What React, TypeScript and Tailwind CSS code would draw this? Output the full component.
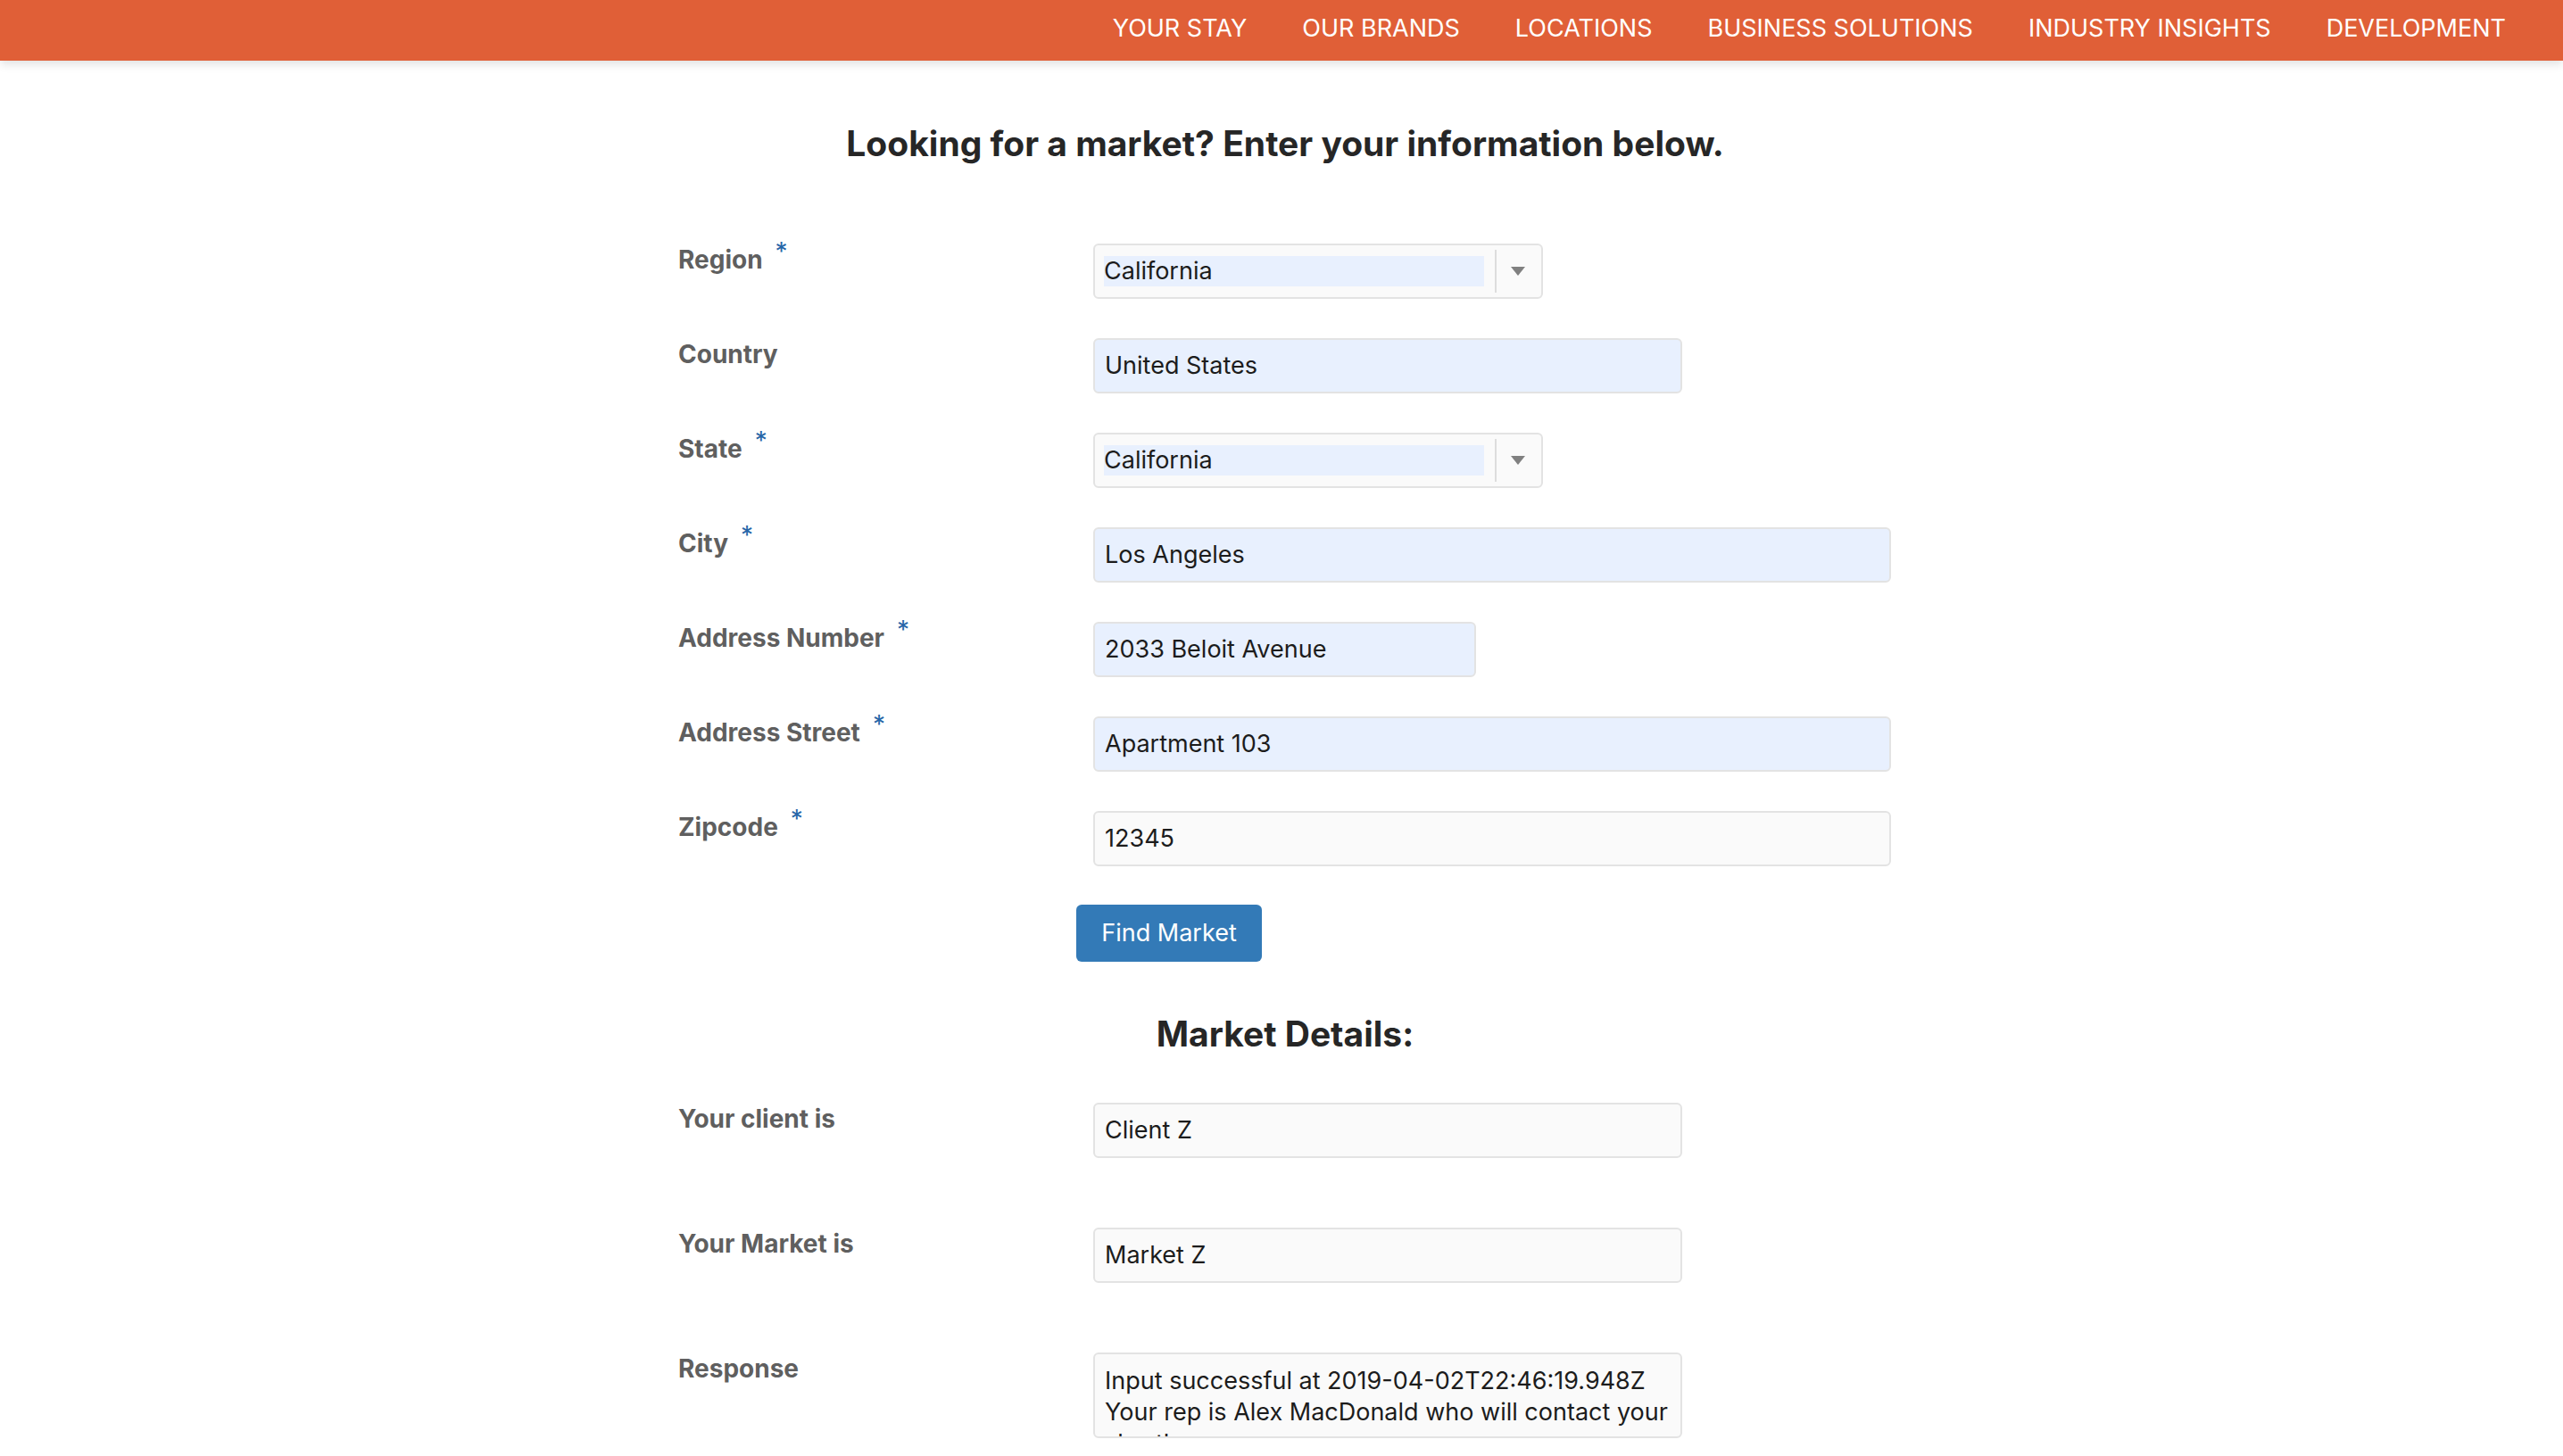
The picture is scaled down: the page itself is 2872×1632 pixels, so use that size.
import clsx from "clsx";

const NAV = [
  "YOUR STAY",
  "OUR BRANDS",
  "LOCATIONS",
  "BUSINESS SOLUTIONS",
  "INDUSTRY INSIGHTS",
  "DEVELOPMENT",
];

function Label({ text, required }: { text: string; required?: boolean }) {
  return (
    <div className="text-[28px] font-bold leading-[28px] text-[#5f5f5f]">
      {text}
      {required && (
        <span className="ml-[14px] align-[9px] font-normal leading-[0px] text-[#2766a8]">*</span>
      )}
    </div>
  );
}

function Row({
  label,
  required,
  children,
}: {
  label: string;
  required?: boolean;
  children: React.ReactNode;
}) {
  return (
    <div className="flex items-start">
      <div className="w-[465px] shrink-0 pt-[4px]">
        <Label text={label} required={required} />
      </div>
      {children}
    </div>
  );
}

function Field({
  value,
  width,
  autofill,
}: {
  value: string;
  width: string;
  autofill?: boolean;
}) {
  return (
    <div
      className={clsx(
        "flex h-[62px] shrink-0 items-center rounded-[6px] border-2 border-[#e3e3e3] px-[11px] text-[27px] text-[#1c1c1c]",
        autofill ? "bg-[#e8f0fe]" : "bg-[#fafafa]",
        width
      )}
    >
      {value}
    </div>
  );
}

function Select({ value }: { value: string }) {
  return (
    <div className="flex h-[62px] w-[504px] shrink-0 items-center rounded-[6px] border-2 border-[#e3e3e3] bg-[#fafafa] pl-[10px] pr-[18px]">
      <div className="flex h-[34px] flex-1 items-center bg-[#e8f0fe] text-[27px] text-[#1c1c1c]">
        {value}
      </div>
      <div className="ml-[12px] h-[48px] w-[2px] bg-[#dddddd]" />
      <svg className="ml-[16px]" width="16" height="10" viewBox="0 0 16 10">
        <polygon points="0,0 16,0 8,10" fill="#808080" />
      </svg>
    </div>
  );
}

export default function App() {
  return (
    <div className="min-h-screen bg-white font-['Inter',sans-serif]">
      <nav className="relative z-10 flex h-[68px] items-center justify-end bg-[#e05f37] pr-[33px] shadow-[0_4px_10px_rgba(0,0,0,0.12)]">
        {NAV.map((item) => (
          <a key={item} className="px-[31px] pb-[4px] text-[27px] text-white">
            {item}
          </a>
        ))}
      </nav>

      <div className="mx-auto w-[1368px] pl-2">
        <h1 className="mt-[69px] text-center text-[39px] font-bold leading-[48px] text-[#262626]">
          Looking for a market? Enter your information below.
        </h1>

        <div className="mt-[88px] flex flex-col gap-[44px]">
          <Row label="Region" required>
            <Select value="California" />
          </Row>
          <Row label="Country">
            <Field value="United States" width="w-[660px]" autofill />
          </Row>
          <Row label="State" required>
            <Select value="California" />
          </Row>
          <Row label="City" required>
            <Field value="Los Angeles" width="w-[894px]" autofill />
          </Row>
          <Row label="Address Number" required>
            <Field value="2033 Beloit Avenue" width="w-[429px]" autofill />
          </Row>
          <Row label="Address Street" required>
            <Field value="Apartment 103" width="w-[894px]" autofill />
          </Row>
          <Row label="Zipcode" required>
            <Field value="12345" width="w-[894px]" />
          </Row>
        </div>

        <button className="ml-[446px] mt-[43px] h-[64px] w-[208px] rounded-[6px] bg-[#337ab7] text-[27px] text-white">
          Find Market
        </button>

        <h2 className="mt-[57px] text-center text-[39px] font-bold leading-[48px] text-[#262626]">
          Market Details:
        </h2>

        <div className="mt-[53px] flex flex-col gap-[78px]">
          <Row label="Your client is">
            <Field value="Client Z" width="w-[660px]" />
          </Row>
          <Row label="Your Market is">
            <Field value="Market Z" width="w-[660px]" />
          </Row>
          <Row label="Response">
            <div className="h-[96px] w-[660px] shrink-0 overflow-hidden rounded-[6px] border-2 border-[#e3e3e3] bg-[#fafafa] px-[11px] pt-[12px] text-[27px] leading-[35px] text-[#1c1c1c]">
              <div className="whitespace-nowrap">Input successful at 2019-04-02T22:46:19.948Z</div>
              <div className="whitespace-nowrap">Your rep is Alex MacDonald who will contact your</div>
              <div className="whitespace-nowrap">shortly.</div>
            </div>
          </Row>
        </div>
        <div className="h-[80px]" />
      </div>
    </div>
  );
}
